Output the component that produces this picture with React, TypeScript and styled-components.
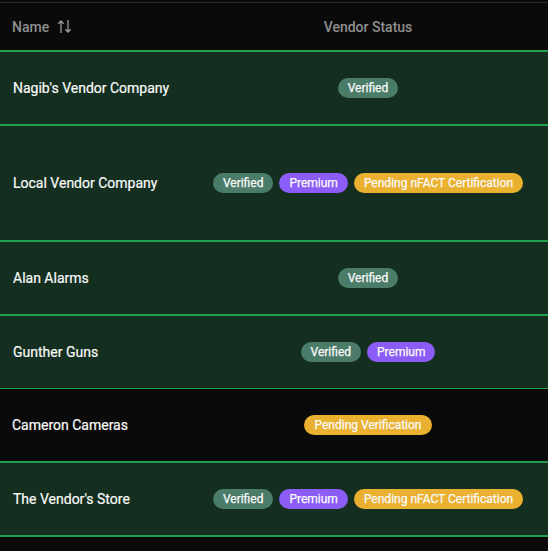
import React from "react";
import styled, { createGlobalStyle } from "styled-components";

type BadgeKind = "verified" | "premium" | "pending";

interface Vendor {
  name: string;
  height: number;
  rule: number;
  highlighted: boolean;
  badges: { label: string; kind: BadgeKind }[];
}

const verified = { label: "Verified", kind: "verified" as BadgeKind };
const premium = { label: "Premium", kind: "premium" as BadgeKind };
const nfact = { label: "Pending nFACT Certification", kind: "pending" as BadgeKind };

const vendors: Vendor[] = [
  { name: "Nagib's Vendor Company", height: 74, rule: 2, highlighted: true, badges: [verified] },
  { name: "Local Vendor Company", height: 116, rule: 2, highlighted: true, badges: [verified, premium, nfact] },
  { name: "Alan Alarms", height: 74, rule: 2, highlighted: true, badges: [verified] },
  { name: "Gunther Guns", height: 74, rule: 2, highlighted: true, badges: [verified, premium] },
  { name: "Cameron Cameras", height: 73, rule: 1, highlighted: false, badges: [{ label: "Pending Verification", kind: "pending" }] },
  { name: "The Vendor's Store", height: 74, rule: 2, highlighted: true, badges: [verified, premium, nfact] },
];

const badgeColors: Record<BadgeKind, string> = {
  verified: "#4b7c69",
  premium: "#8b5cf6",
  pending: "#eab02f",
};

const GlobalStyle = createGlobalStyle`
  html, body {
    margin: 0;
    background: #0a0a0a;
    overflow: hidden;
  }
  body {
    font-family: Roboto, "Liberation Sans", sans-serif;
  }
`;

const Page = styled.div`
  width: 548px;
  height: 551px;
  background: #0a0a0a;
  overflow: hidden;
`;

const TopRule = styled.div`
  height: 1px;
  margin-top: 2px;
  background: #2a2a2a;
`;

const HeaderRow = styled.div`
  display: grid;
  grid-template-columns: 188px 360px;
  height: 47px;
  align-items: center;
`;

const NameHeading = styled.div`
  display: flex;
  align-items: center;
  gap: 9px;
  padding-left: 12px;
  font-size: 14px;
  font-weight: 500;
  color: #8f8f8f;
`;

const StatusHeading = styled.div`
  text-align: center;
  font-size: 14px;
  font-weight: 500;
  color: #8f8f8f;
`;

const Row = styled.div<{ $height: number; $rule: number; $highlighted: boolean }>`
  display: grid;
  grid-template-columns: 188px 360px;
  align-items: center;
  box-sizing: border-box;
  height: ${(p) => p.$height}px;
  border-top: ${(p) => p.$rule}px solid #22a04c;
  background: ${(p) => (p.$highlighted ? "#142f20" : "#0a0a0a")};
`;

const NameCell = styled.div<{ $highlighted: boolean }>`
  padding-left: ${(p) => (p.$highlighted ? 13 : 12)}px;
  font-size: 14px;
  font-weight: 400;
  color: #fafafa;
  -webkit-text-stroke: 0.2px #fafafa;
  white-space: nowrap;
`;

const BadgeList = styled.div`
  display: flex;
  justify-content: center;
  gap: 6px;
`;

const Badge = styled.span<{ $kind: BadgeKind }>`
  display: inline-flex;
  align-items: center;
  height: 20px;
  padding: 0 10px;
  border-radius: 10px;
  background: ${(p) => badgeColors[p.$kind]};
  font-size: 12px;
  font-weight: 400;
  color: #fafafa;
  -webkit-text-stroke: 0.25px #fafafa;
  white-space: nowrap;
`;

const EndRule = styled.div`
  height: 2px;
  background: #22a04c;
`;

function SortIcon() {
  return (
    <svg width="14" height="13" viewBox="0 0 14 13" fill="none" stroke="#9a9a9a" strokeWidth="1.3">
      <path d="M3 13V1M.3 3.7L3 1l2.7 2.7" />
      <path d="M10 0v12M7.3 9.3L10 12l2.7-2.7" />
    </svg>
  );
}

export default function App() {
  return (
    <Page>
      <GlobalStyle />
      <TopRule />
      <HeaderRow>
        <NameHeading>
          Name
          <SortIcon />
        </NameHeading>
        <StatusHeading>Vendor Status</StatusHeading>
      </HeaderRow>
      {vendors.map((vendor) => (
        <Row key={vendor.name} $height={vendor.height} $rule={vendor.rule} $highlighted={vendor.highlighted}>
          <NameCell $highlighted={vendor.highlighted}>{vendor.name}</NameCell>
          <BadgeList>
            {vendor.badges.map((badge) => (
              <Badge key={badge.label} $kind={badge.kind}>
                {badge.label}
              </Badge>
            ))}
          </BadgeList>
        </Row>
      ))}
      <EndRule />
    </Page>
  );
}
